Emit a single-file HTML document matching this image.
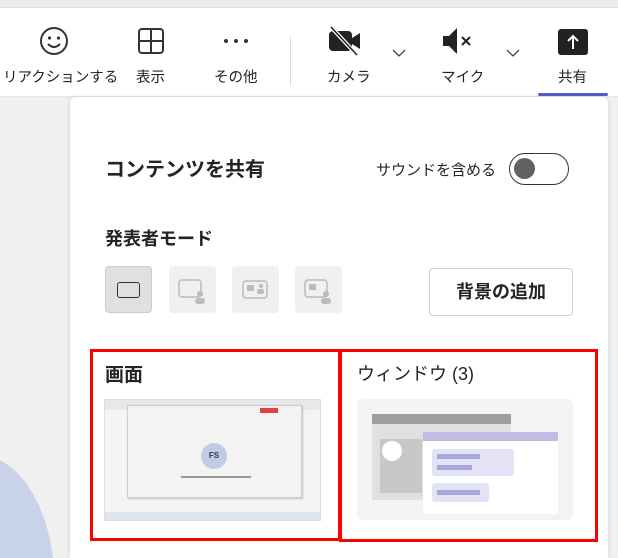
<!DOCTYPE html>
<html style="width:618px;height:558px;overflow:hidden"><head><meta charset="utf-8">
<style>
*{margin:0;padding:0;box-sizing:border-box}
body{width:618px;height:558px;overflow:hidden;background:radial-gradient(ellipse 75px 130px at -20px 585px,#c8d3ea 99%,rgba(200,211,234,0) 100%),#f0f0f0;font-family:"Liberation Sans","Noto Sans CJK JP",sans-serif;color:#242424;position:relative}
.top{position:absolute;left:0;top:0;width:618px;height:8px;background:#ebebeb;border-bottom:1px solid #e0e0e0}
.bar{position:absolute;left:0;top:8px;width:618px;height:89px;background:#fff;border-bottom:1px solid #e6e6e6}
.lbl{position:absolute;top:58px;white-space:nowrap;font-size:14.5px}
.sep{position:absolute;left:290px;top:28px;width:1px;height:50px;background:#ddd}
.ul{position:absolute;left:538px;top:93px;width:70px;height:3px;background:#5b5fc7;border-radius:2px}
.panel{position:absolute;left:70px;top:97px;width:538px;height:461px;background:#fff;border-radius:6px 6px 0 0;box-shadow:0 0 6px rgba(0,0,0,.12)}
.h{position:absolute;font-weight:bold;white-space:nowrap}
.mode{position:absolute;top:266px;width:47px;height:47px;border-radius:4px;background:#f0f0f0}
.red{position:absolute;border:3px solid #f00}
</style></head><body>
<div class="top"></div>
<div class="bar">
  <svg style="position:absolute;left:38px;top:17px" width="32" height="32" viewBox="0 0 32 32"><circle cx="16" cy="16" r="13" fill="none" stroke="#333" stroke-width="2"/><circle cx="11.5" cy="13" r="1.6" fill="#333"/><circle cx="20.5" cy="13" r="1.6" fill="#333"/><path d="M10 19 Q16 25 22 19" fill="none" stroke="#333" stroke-width="2"/></svg>
  <div class="lbl" style="left:3px">リアクションする</div>
  <svg style="position:absolute;left:137px;top:19px" width="28" height="28" viewBox="0 0 28 28"><rect x="2" y="2" width="24" height="24" rx="3" fill="none" stroke="#333" stroke-width="2"/><path d="M14 2V26M2 14H26" stroke="#333" stroke-width="2"/></svg>
  <div class="lbl" style="left:136px">表示</div>
  <svg style="position:absolute;left:222px;top:30px" width="28" height="6"><circle cx="4" cy="3" r="2" fill="#333"/><circle cx="14" cy="3" r="2" fill="#333"/><circle cx="24" cy="3" r="2" fill="#333"/></svg>
  <div class="lbl" style="left:214px">その他</div>
  <div class="sep"></div>
  <svg style="position:absolute;left:327px;top:18px" width="36" height="30" viewBox="0 0 36 30"><rect x="2" y="5" width="23" height="20" rx="4" fill="#222"/><path d="M25 12L33 7V23L25 18Z" fill="#222"/><path d="M4 1L30 29" stroke="#fff" stroke-width="4"/><path d="M4 1L30 29" stroke="#222" stroke-width="1.6"/></svg>
  <div class="lbl" style="left:327px">カメラ</div>
  <svg style="position:absolute;left:391px;top:40px" width="16" height="10"><path d="M2 2L8 8L14 2" fill="none" stroke="#444" stroke-width="1.3"/></svg>
  <svg style="position:absolute;left:441px;top:18px" width="36" height="30" viewBox="0 0 36 30"><path d="M2 10H8L16 2V28L8 20H2Z" fill="#222"/><path d="M21 11L29 19M29 11L21 19" stroke="#222" stroke-width="2"/></svg>
  <div class="lbl" style="left:441px">マイク</div>
  <svg style="position:absolute;left:505px;top:40px" width="16" height="10"><path d="M2 2L8 8L14 2" fill="none" stroke="#444" stroke-width="1.3"/></svg>
  <svg style="position:absolute;left:557px;top:20px" width="32" height="28" viewBox="0 0 32 28"><rect x="1" y="1" width="30" height="26" rx="3" fill="#222"/><path d="M16 21V8M11 13L16 8L21 13" fill="none" stroke="#fff" stroke-width="2"/></svg>
  <div class="lbl" style="left:558px">共有</div>
</div>
<div class="ul"></div>
<div class="panel"></div>
<div class="h" style="left:105px;top:153px;font-size:20px">コンテンツを共有</div>
<div style="position:absolute;left:376px;top:159px;font-size:15px;white-space:nowrap">サウンドを含める</div>
<div style="position:absolute;left:509px;top:153px;width:60px;height:32px;border:1.5px solid #333;border-radius:16px"><div style="position:absolute;left:4px;top:4px;width:21px;height:21px;border-radius:50%;background:#616161"></div></div>
<div class="h" style="left:105px;top:225px;font-size:18px">発表者モード</div>
<div class="mode" style="left:105px;background:#e0e0e0;border:1px solid #ccc"><div style="position:absolute;left:11px;top:15px;width:23px;height:16px;border:1.5px solid #333;border-radius:3px"></div></div>
<div class="mode" style="left:169px"><svg width="47" height="47"><rect x="10" y="14" width="22" height="17" rx="3" fill="none" stroke="#bbb" stroke-width="1.5"/><circle cx="31" cy="28" r="3" fill="#bbb"/><rect x="26" y="32" width="10" height="6" rx="3" fill="#bbb"/></svg></div>
<div class="mode" style="left:232px"><svg width="47" height="47"><rect x="11" y="15" width="24" height="17" rx="3" fill="none" stroke="#bbb" stroke-width="1.5"/><rect x="15" y="19" width="7" height="6" fill="#bbb"/><circle cx="29" cy="20" r="2" fill="#bbb"/><rect x="25" y="23" width="7" height="5" rx="2" fill="#bbb"/></svg></div>
<div class="mode" style="left:295px"><svg width="47" height="47"><rect x="10" y="14" width="22" height="17" rx="3" fill="none" stroke="#bbb" stroke-width="1.5"/><rect x="14" y="18" width="7" height="6" fill="#bbb"/><circle cx="31" cy="28" r="3" fill="#bbb"/><rect x="26" y="32" width="10" height="6" rx="3" fill="#bbb"/></svg></div>
<div style="position:absolute;left:429px;top:268px;width:144px;height:48px;border:1px solid #d1d1d1;border-radius:4px;text-align:center;line-height:46px;font-size:18px;font-weight:bold">背景の追加</div>
<div class="red" style="left:90px;top:349px;width:251px;height:192px"></div>
<div class="red" style="left:339px;top:349px;width:259px;height:193px"></div>
<div class="h" style="left:105px;top:360px;font-size:19px">画面</div>
<div style="position:absolute;left:357px;top:360px;font-size:18px;white-space:nowrap">ウィンドウ (3)</div>
<div style="position:absolute;left:104px;top:399px;width:217px;height:122px;background:#f4f4f4;border:1px solid #ddd">
  <div style="position:absolute;left:0;top:0;width:215px;height:10px;background:#e8e8e8"></div>
  <div style="position:absolute;left:22px;top:5px;width:175px;height:93px;background:#f3f3f3;border:1px solid #ccc;box-shadow:1px 1px 2px rgba(0,0,0,.2)"></div>
  <div style="position:absolute;left:155px;top:8px;width:18px;height:5px;background:#e04040"></div>
  <div style="position:absolute;left:96px;top:43px;width:26px;height:26px;border-radius:50%;background:#bfcde4;font-size:8px;font-weight:bold;color:#334;text-align:center;line-height:26px">FS</div>
  <div style="position:absolute;left:76px;top:76px;width:70px;height:2px;background:#999"></div>
  <div style="position:absolute;left:0;top:112px;width:215px;height:8px;background:#dde5ee"></div>
</div>
<div style="position:absolute;left:357px;top:399px;width:216px;height:121px;background:#f3f3f3;border-radius:6px">
  <div style="position:absolute;left:15px;top:15px;width:139px;height:86px;background:#e0e0e0"><div style="height:10px;background:#9e9e9e"></div><div style="position:absolute;left:8px;top:25px;width:42px;height:54px;background:#c8c8c8"></div><div style="position:absolute;left:10px;top:27px;width:20px;height:20px;border-radius:50%;background:#fff"></div></div>
  <div style="position:absolute;left:66px;top:33px;width:135px;height:82px;background:#fff"><div style="height:9px;background:#c0bde4"></div>
    <div style="position:absolute;left:9px;top:17px;width:82px;height:27px;background:#e3e3f5;border-radius:3px"></div>
    <div style="position:absolute;left:14px;top:22px;width:43px;height:5px;background:#a8a8dc"></div>
    <div style="position:absolute;left:14px;top:33px;width:35px;height:5px;background:#a8a8dc"></div>
    <div style="position:absolute;left:9px;top:51px;width:57px;height:19px;background:#e3e3f5;border-radius:3px"></div>
    <div style="position:absolute;left:14px;top:58px;width:43px;height:5px;background:#a8a8dc"></div>
  </div>
</div>
</body></html>
